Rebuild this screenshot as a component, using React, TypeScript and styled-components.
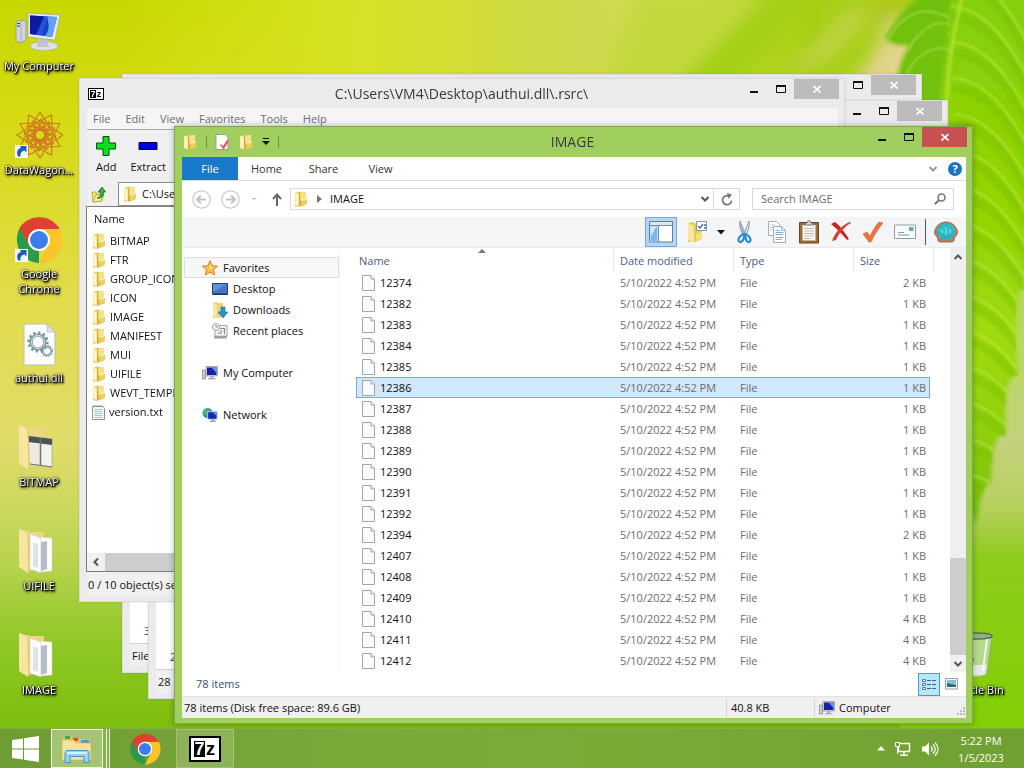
import React from "react";
import styled, { createGlobalStyle } from "styled-components";

const GlobalStyle = createGlobalStyle`
  *, *::before, *::after { box-sizing: border-box; }
  html, body { margin: 0; height: 100%; overflow: hidden; }
  body { font: 11px/16px "Open Sans", "Noto Sans", sans-serif; color: #111; }
  button, input { font: inherit; color: inherit; margin: 0; padding: 0; border: 0; background: none; }
  a { color: inherit; text-decoration: none; }
  svg { display: block; flex: none; }
`;

/* ---------- desktop ---------- */

const Screen = styled.div`
  display: flex;
  flex-direction: column;
  height: 100vh;
  position: relative;
  overflow: hidden;
`;

const Wallpaper = styled.svg`
  position: absolute;
  inset: 0;
  width: 100%;
  height: 100%;
`;

const Desktop = styled.main`
  flex: 1;
  min-height: 0;
  position: relative;
`;

const Shortcuts = styled.nav`
  position: relative;
  width: 78px;
  display: flex;
  flex-direction: column;
`;

const ShortcutLink = styled.a<{ $corner?: boolean }>`
  display: flex;
  flex-direction: column;
  align-items: center;
  gap: 2px;
  width: 78px;
  height: 104px;
  padding-top: 8px;
  line-height: 15px;
  text-align: center;
  color: #fff;
  text-shadow: 0 0 1px #000, 1px 1px 1px #000, 1px 1px 2px #000, 0 0 3px #000, 1px 2px 3px #000;
  ${(p) => p.$corner && "position: absolute; right: 10px; bottom: 0;"}
  span { white-space: nowrap; }
`;

/* ---------- window chrome ---------- */

interface Place { $left: number; $top: number; $right: number; $bottom: number; $active?: boolean }

const Frame = styled.section<Place>`
  position: absolute;
  left: ${(p) => p.$left}px;
  top: ${(p) => p.$top}px;
  right: ${(p) => p.$right}px;
  bottom: ${(p) => p.$bottom}px;
  display: flex;
  flex-direction: column;
  border: 1px solid ${(p) => (p.$active ? "#7fa84c" : "#dcdcdc")};
  background: ${(p) => (p.$active ? "#a0cf60" : "#ebebeb")};
  box-shadow: 0 0 ${(p) => (p.$active ? "6px rgba(0,0,0,.3)" : "2px rgba(0,0,0,.12)")};
`;

const TitleBar = styled.header<{ $tall?: boolean }>`
  flex: none;
  height: ${(p) => (p.$tall ? 30 : 29)}px;
  display: grid;
  grid-template-columns: 1fr auto 1fr;
  align-items: center;
  padding-right: 5px;
  padding-left: ${(p) => (p.$tall ? 7 : 8)}px;
  h1 { margin: 0 4px 0 0; font-size: 14px; line-height: 20px; font-weight: 400; color: #3a3a3a; }
`;

const Controls = styled.div`
  display: flex;
  justify-self: end;
  align-self: start;
`;

const ControlButton = styled.button<{ $close?: boolean; $active?: boolean }>`
  width: ${(p) => (p.$close ? 45 : 27)}px;
  height: 20px;
  display: flex;
  align-items: center;
  justify-content: center;
  background: ${(p) => (p.$close ? (p.$active ? "#c75050" : "#bcbcbc") : "transparent")};
`;

const Client = styled.div`
  flex: 1;
  min-height: 0;
  display: flex;
  flex-direction: column;
  margin: 0 6px 5px 7px;
  background: #fff;
`;

const WindowControls = ({ active }: { active?: boolean }) => (
  <Controls>
    <ControlButton aria-label="Minimize">
      <svg width="10" height="10"><path d="M1 8h8" stroke="#111" strokeWidth="2" /></svg>
    </ControlButton>
    <ControlButton aria-label="Maximize">
      <svg width="10" height="10"><path d="M.5 2v6.500h9V2z" fill="none" stroke="#111" /><path d="M0 2h10" stroke="#111" strokeWidth="2" /></svg>
    </ControlButton>
    <ControlButton aria-label="Close" $close $active={active}>
      <svg width="8" height="8"><path d="M.5 1l7 6.500M7.500 1l-7 6.500" stroke="#fff" strokeWidth="1.700" /></svg>
    </ControlButton>
  </Controls>
);

/* ---------- 7-Zip ---------- */

const ZipBadge = styled.span<{ $large?: boolean }>`
  display: inline-flex;
  width: ${(p) => (p.$large ? 32 : 16)}px;
  height: ${(p) => (p.$large ? 26 : 12)}px;
  border: ${(p) => (p.$large ? 2 : 1)}px solid #000;
  padding: ${(p) => (p.$large ? 3 : 1)}px;
  background: #fff;
  color: #000;
  font: 700 ${(p) => (p.$large ? "18px/17px" : "9px/8px")} "Liberation Sans", sans-serif;
  b, i { flex: 1; text-align: center; font-style: normal; font-weight: 700; }
  b { background: #000; color: #fff; }
`;
const SevenZip = ({ large }: { large?: boolean }) => <ZipBadge $large={large}><b>7</b><i>z</i></ZipBadge>;

const MenuBar = styled.div`
  flex: none;
  height: 22px;
  display: flex;
  align-items: center;
  gap: 15px;
  padding-left: 6px;
  background: #f5f5f5;
  border-bottom: 1px solid #a8a8a8;
  color: #6e6e6e;
`;

const ZipTools = styled.div`
  flex: none;
  height: 52px;
  display: flex;
  gap: 14px;
  padding: 6px 0 0 9px;
  background: #f0f0f0;
  button { display: flex; flex-direction: column; align-items: center; gap: 3px; align-self: start; }
`;

const ZipPath = styled.div`
  flex: none;
  height: 24px;
  display: flex;
  background: #f0f0f0;
  > button { width: 31px; display: flex; align-items: center; padding-left: 4px; }
  > label { flex: 1; display: flex; align-items: center; gap: 4px; padding-left: 3px; background: #fff; border: 1px solid #8c8c8c; }
  input { flex: 1; }
`;

const ZipList = styled.div`
  flex: 1;
  min-height: 0;
  display: flex;
  flex-direction: column;
  border: 1px solid #7c7c7c;
  border-right: 0;
  margin-left: -1px;
  h2 { margin: 0; padding: 4px 7px; height: 24px; font: inherit; }
  ul { list-style: none; margin: 0; padding: 0; flex: 1; min-height: 0; }
  li { height: 19px; display: flex; align-items: center; gap: 3px; padding-left: 4px; white-space: nowrap; }
`;

const HScroll = styled.div`
  height: 18px;
  display: flex;
  background: #cdcdcd;
  button { width: 18px; background: #f0f0f0; display: flex; align-items: center; justify-content: center; }
`;

const ZipStatus = styled.footer`
  flex: none;
  height: 24px;
  padding: 5px 1px;
  background: #f0f0f0;
`;

const BackBody = styled.div`
  flex: 1;
  display: flex;
  align-items: flex-end;
  padding: 0 14px 4px;
  border-bottom: 1px solid #d0d0d0;
  color: #444;
`;

const BackStatus = styled.footer`
  height: 23px;
  padding: 4px 2px;
  background: #f0f0f0;
`;

/* ---------- Explorer ---------- */

const QuickAccess = styled.div`
  display: flex;
  align-items: center;
  gap: 8px;
  button { display: flex; }
`;

const Divider = styled.span<{ $dark?: boolean }>`
  width: 1px;
  height: ${(p) => (p.$dark ? 26 : 12)}px;
  background: ${(p) => (p.$dark ? "#555" : "#6f9440")};
`;

const Tabs = styled.div`
  flex: none;
  height: 24px;
  display: flex;
  align-items: stretch;
  border-bottom: 1px solid #dadbdc;
`;

const Tab = styled.button<{ $primary?: boolean }>`
  width: ${(p) => (p.$primary ? 56 : 57)}px;
  color: ${(p) => (p.$primary ? "#fff" : "#333")};
  background: ${(p) => (p.$primary ? "#1979ca" : "transparent")};
`;

const TabsEnd = styled.div`
  margin-left: auto;
  display: flex;
  align-items: center;
  gap: 10px;
  padding-right: 4px;
  button { display: flex; }
`;

const Help = styled.button`
  width: 14px;
  height: 14px;
  border-radius: 50%;
  background: #1b73c4;
  color: #fff;
  justify-content: center;
  font-weight: 700;
  line-height: 14px;
`;

const NavRow = styled.div`
  flex: none;
  height: 36px;
  display: flex;
  align-items: center;
  gap: 10px;
  padding: 0 12px 0 10px;
  > button { display: flex; }
`;

const Box = styled.div<{ $search?: boolean }>`
  height: 22px;
  display: flex;
  align-items: center;
  border: 1px solid #d9d9d9;
  ${(p) => (p.$search ? "flex: 0 0 202px; margin-left: 2px; padding: 0 7px 0 8px;" : "flex: 1; padding-left: 2px; gap: 8px; margin-left: -6px;")}
  button { display: flex; align-items: center; }
  input { flex: 1; min-width: 0; outline: 0; }
  input::placeholder { color: #6d6d6d; opacity: 1; }
`;

const BoxEnd = styled.div`
  margin-left: auto;
  display: flex;
  align-self: stretch;
  button { width: 25px; justify-content: center; }
  button:first-child { width: 18px; border-right: 1px solid #d9d9d9; }
`;

const CommandBar = styled.div`
  flex: none;
  height: 31px;
  display: flex;
  align-items: center;
  justify-content: flex-end;
  gap: 8px;
  padding-right: 8px;
  background: #f3f5f7;
  border-bottom: 1px solid #e6ebf0;
`;

const Command = styled.button<{ $on?: boolean }>`
  display: flex;
  align-items: center;
  justify-content: center;
  min-width: ${(p) => (p.$on ? 32 : 24)}px;
  height: 30px;
  ${(p) => p.$on && "background: #b9d5f3; border: 1px solid #76a7de;"}
`;

const Panes = styled.div`
  flex: 1;
  min-height: 0;
  display: flex;
`;

const Tree = styled.nav`
  flex: 0 0 158px;
  padding: 9px 0 0 2px;
  border-right: 1px solid #f7f7f7;
`;

const TreeItem = styled.a<{ $depth?: boolean; $head?: boolean; $spaced?: boolean }>`
  display: flex;
  align-items: center;
  gap: 5px;
  height: 21px;
  padding-left: ${(p) => (p.$depth ? 28 : 18)}px;
  margin-top: ${(p) => (p.$spaced ? 21 : 0)}px;
  ${(p) => p.$head && "background: #f7f7f7; box-shadow: inset 0 0 0 1px #dedede;"}
`;

const ListPane = styled.div`
  flex: 1;
  min-width: 0;
  overflow: hidden;
  padding: 0 16px 0 16px;
`;

const Table = styled.table`
  width: 100%;
  table-layout: fixed;
  border-collapse: separate;
  border-spacing: 0;
  th { height: 24px; padding: 2px 6px 0; font-weight: 400; text-align: left; color: #4c607a; position: relative; border-right: 1px solid #eaeaea; }
  th:first-child { padding-left: 3px; }
  td { height: 21px; padding: 0 7px 0 6px; color: #6d6d6d; white-space: nowrap; }
  td:nth-child(4) { text-align: right; padding: 0 4px 0 0; }
`;

const SortMark = styled.svg`
  position: absolute;
  top: 1px;
  left: 50%;
  margin-left: -7px;
`;

const FileRow = styled.tr<{ $selected?: boolean }>`
  ${(p) => p.$selected && `
    td:not(:last-child) { background: #d1e8fb; border: solid #7da8d0; border-width: 1px 0; }
    td:first-child { border-left-width: 1px; padding-left: 5px; }
    td:nth-child(4) { border-right-width: 1px; padding-right: 3px; }
  `}
`;

const FileName = styled.span`
  display: flex;
  align-items: center;
  gap: 5px;
  color: #111;
`;

const VScroll = styled.div`
  flex: 0 0 16px;
  display: flex;
  flex-direction: column;
  background: #f0f0f0;
  button { height: 17px; display: flex; align-items: center; justify-content: center; }
`;

const Track = styled.div`
  flex: 1;
  display: flex;
  align-items: flex-end;
  &::after { content: ""; width: 100%; height: 25%; background: #cdcdcd; }
`;

const Details = styled.div`
  flex: none;
  height: 24px;
  display: flex;
  align-items: center;
  padding: 0 4px 0 14px;
  color: #3c5064;
  span { flex: 1; }
`;

const ViewButton = styled.button<{ $on?: boolean }>`
  display: flex;
  align-items: center;
  justify-content: center;
  width: 22px;
  height: 23px;
  ${(p) => p.$on && "background: #b8e6fb; border: 1px solid #3fa0d0;"}
`;

const StatusBar = styled.footer`
  flex: none;
  height: 22px;
  display: flex;
  align-items: center;
  background: #f0f0f0;
  border-top: 1px solid #e2e2e2;
`;

const StatusCell = styled.span<{ $width?: number }>`
  ${(p) => (p.$width ? `flex: 0 0 ${p.$width}px; padding-left: 4px; border-left: 1px solid #d7d7d7;` : "flex: 1; padding-left: 2px;")}
  display: flex;
  align-items: center;
  gap: 4px;
  height: 20px;
  svg:last-child:not(:first-child) { margin: 7px 1px 0 auto; }
`;

/* ---------- taskbar ---------- */

const Taskbar = styled.footer`
  flex: none;
  height: 40px;
  position: relative;
  display: flex;
  align-items: stretch;
  background: linear-gradient(90deg, #6f9c33, #7aa93a 35%, #7aaa36 60%, #70a033);
  border-top: 1px solid #82ae45;
`;

const TaskButton = styled.button<{ $width: number; $state?: "front" | "open" }>`
  width: ${(p) => p.$width}px;
  display: flex;
  align-items: center;
  justify-content: center;
  ${(p) => p.$state === "front" && "background: #a4c474; border: 1px solid #eef6e0; box-shadow: 3px 0 0 #86b04c, 4px 0 0 #eef6e0, 6px 0 0 #86b04c, 7px 0 0 #dcebc4; margin-right: 10px; position: relative;"}
  ${(p) => p.$state === "open" && "background: #8db257; border: 1px solid #a3c276;"}
`;

const Tray = styled.div`
  margin-left: auto;
  display: flex;
  align-items: center;
  gap: 9px;
  color: #fff;
  button { display: flex; }
`;

const Clock = styled.time`
  width: 76px;
  margin-left: -4px;
  padding-right: 2px;
  margin-right: 4px;
  line-height: 17px;
  text-align: center;
`;

/* ---------- small drawings ---------- */

const Folder = ({ size = 16 }: { size?: number }) => (
  <svg width={size} height={size} viewBox="0 0 16 16">
    <path d="M2 2l4.500-1.500L8 1h4l1 1v11.500L7.500 15.500H2z" fill="#e3c34e" />
    <path d="M7 2.500l2-1.500h4v7l-6 2z" fill="#f6e389" />
    <path d="M9 9l5-2v6l-5 2z" fill="#efcf62" />
    <path d="M2 1.500L6.500 3v12.500L2 14z" fill="#f9eda4" />
    <path d="M3 3l2 .7v10L3 13z" fill="#fdf7c8" />
    <path d="M6.700 3v12.500" stroke="#c79f34" />
    <path d="M9.500 9.200l4.500-2" stroke="#fffbe0" />
  </svg>
);

const PageIcon = () => (
  <svg width="13" height="16" viewBox="0 0 13 16">
    <path d="M.5.500h8.500l3.500 3.500v11.500H.5z" fill="#fbfbfb" stroke="#a4a4a4" />
    <path d="M9 .5V4h3.500" fill="#eee" stroke="#a4a4a4" />
  </svg>
);

const TextFile = () => (
  <svg width="15" height="16" viewBox="0 0 15 16">
    <path d="M1.500 2.500h10.500l1.500 2v11h-12z" fill="#f6f8f8" stroke="#8b9393" />
    <path d="M3 1v2M5 1v2M7 1v2M9 1v2M11 1v2" stroke="#888" strokeWidth=".8" />
    <path d="M3.500 5.500h8M3.500 7.500h8M3.500 9.500h8M3.500 11.500h8M3.500 13.500h8" stroke="#a8c4c4" />
  </svg>
);

const Monitor = () => (
  <svg width="16" height="16" viewBox="0 0 16 16">
    <path d="M.5 5h3v9h-3z" fill="#c9cdd3" stroke="#868b92" strokeWidth=".8" />
    <path d="M4 1.500h11.500v9.500H4z" fill="#d9dce2" stroke="#8e9299" strokeWidth=".7" />
    <path d="M5 2.500h9.500v7.500H5z" fill="#1523a5" />
    <path d="M9.500 2.500h5V8z" fill="#7690e6" />
    <path d="M8 11h3.500v2H8zM6 13h7.500v1.500H6z" fill="#aeb2b8" />
  </svg>
);

const Chevron = ({ up, side, color = "#555" }: { up?: boolean; side?: boolean; color?: string }) => (
  <svg width="10" height="10" viewBox="0 0 10 10">
    <path d={side ? "M7 1.500L3.500 5 7 8.500" : up ? "M1.500 7L5 3.500 8.500 7" : "M1.500 3L5 6.500 8.500 3"} fill="none" stroke={color} strokeWidth="2" />
  </svg>
);

const ShortcutArrow = () => (
  <g>
    <path d="M0 33h13v13H0z" fill="#f5f8fb" />
    <path d="M3 44.500c-2-4-.5-8 3-8.500L5 34l6.500 0v6.500L9.500 38.500C6.500 39 5 41 5.500 44.500z" fill="#1c5fb4" />
  </g>
);

const BigComputer = () => (
  <svg width="48" height="48" viewBox="0 0 48 48">
    <path d="M1 14l5-2 5 1v19l-5 3-5-2z" fill="#d0d5dc" stroke="#8a9098" strokeWidth=".7" />
    <path d="M6 13v21" stroke="#9aa0a8" strokeWidth=".7" />
    <path d="M2 15.500h3M2 18h3" stroke="#444" />
    <ellipse cx="29" cy="38" rx="14" ry="4.500" fill="#dfe1e5" stroke="#a3a7ac" strokeWidth=".6" />
    <path d="M23 31h9l2 8h-12z" fill="#bfc3ca" />
    <path d="M13 5l32 2-5 25-27-3z" fill="#e8eaef" stroke="#9ea4ad" strokeWidth=".7" />
    <path d="M15 7.500l27 1.500-5 20-22-3z" fill="#1b3fc8" />
    <path d="M15 7.500l14 .8-8 18.500-6-.8z" fill="#0b1b9c" />
    <path d="M32 8.500l10 .5-5 20-7-.9c5-6 4-12 2-19.600z" fill="#5fa4f0" />
    <path d="M30 8.300l3 .2-6 19-6-.8z" fill="#2a5bd8" opacity=".7" />
  </svg>
);

const Rosette = () => (
  <svg width="48" height="48" viewBox="0 0 48 48">
    <g fill="none" stroke="#d07c22" strokeWidth="1.200">
      {Array.from({ length: 12 }, (_, i) => (
        <path key={i} transform={`rotate(${i * 30} 25 23)`} d="M25 0L35 16 25 32 15 16zM25 17c5-2 5-8 0-10" />
      ))}
    </g>
    <ShortcutArrow />
  </svg>
);

const Chrome = ({ size = 48, shortcut }: { size?: number; shortcut?: boolean }) => (
  <svg width={size} height={size} viewBox="0 0 48 48">
    <path d="M4.900 12l9.600 17.500L24 34l0 13A23.500 23.500 0 0 1 4.900 12z" fill="#2a9a4c" />
    <path d="M24 13h20.700A23.500 23.500 0 0 1 24 47.500L33.500 29.500z" fill="#fcc42b" />
    <path d="M44.700 13H24L14.500 29.500 4.400 12.200A23.500 23.500 0 0 1 44.700 13z" fill="#dd4132" />
    <circle cx="24" cy="24" r="11" fill="#fff" />
    <circle cx="24" cy="24" r="9" fill="#3b7ded" />
    {shortcut && <ShortcutArrow />}
  </svg>
);

const Gear = ({ cx, cy, r }: { cx: number; cy: number; r: number }) => (
  <g fill="none">
    <circle cx={cx} cy={cy} r={r} stroke="#73909c" strokeWidth={r / 2.200} />
    <circle cx={cx} cy={cy} r={r * 1.350} stroke="#73909c" strokeWidth={r / 3} strokeDasharray={`${r / 3} ${r / 2.700}`} />
    <circle cx={cx} cy={cy} r={r * 0.950} stroke="#c8dbe2" strokeWidth={r / 6} />
  </g>
);

const DllFile = () => (
  <svg width="48" height="48" viewBox="0 0 48 48">
    <path d="M9 4h23l8 8v33H9z" fill="#fcfcfc" stroke="#bdbdb0" />
    <path d="M32 4v8h8z" fill="#dfe2e2" stroke="#b0b0a8" strokeWidth=".6" />
    <Gear cx={23} cy={22} r={7} />
    <Gear cx={32} cy={31} r={4} />
  </svg>
);

const OpenFolder = ({ photo }: { photo?: boolean }) => (
  <svg width="48" height="48" viewBox="0 0 48 48">
    <path d="M4 1l12 3h13v36l-14 3z" fill="#ecd684" />
    {photo ? (
      <g>
        <path d="M13 12l24 3v28l-22-3z" fill="#f4f2ee" stroke="#98988e" strokeWidth=".6" />
        <path d="M13 12l24 3v6l-24-3z" fill="#4b5354" />
        <path d="M14 19l12 1v20l-11-2z" fill="#f1e9e0" />
        <path d="M25.500 14v28" stroke="#6b7374" strokeWidth="1.500" />
        <path d="M15 40l22 3" stroke="#777" />
      </g>
    ) : (
      <g>
        <path d="M25 9l12 1v33l-11 1z" fill="#fff" stroke="#cfcfcf" strokeWidth=".6" />
        <path d="M26 14l6-1v28l-6 2z" fill="#b4bdc8" />
        <path d="M15 6l11 4v35l-11-4z" fill="#fbfbfc" stroke="#cfcfd2" strokeWidth=".6" />
        <path d="M18 14l5 2v24l-5-2z" fill="#e2e2e6" />
      </g>
    )}
    <path d="M4 1l9 5 2 34-2 5-9-6z" fill="#f7e6a2" />
    <path d="M13 6l1 38" stroke="#dcc06a" />
  </svg>
);

const RecycleBin = () => (
  <svg width="48" height="48" viewBox="0 0 48 48">
    <path d="M10 3h31l-5 39c-6 4-15 4-21 0z" fill="#c3dcae" opacity=".8" stroke="#98a898" />
    <ellipse cx="25.500" cy="4" rx="15.500" ry="3" fill="#8db578" stroke="#5c6c5c" strokeWidth="1.500" />
    <path d="M15 33h21l-2 9c-5 2-12 2-17 0z" fill="#e4ebe4" />
    <path d="M12 24l9-2 2 6-5 6-6-3z" fill="#2a62bd" />
    <path d="M36 7l-4 32" stroke="#fff" strokeWidth="2" opacity=".8" />
  </svg>
);

const Star = () => (
  <svg width="16" height="16" viewBox="0 0 16 16">
    <path d="M8 .8l2.100 5 5.400.400-4.100 3.500 1.300 5.300L8 12.100 3.300 15l1.300-5.300L.5 6.200l5.400-.4z" fill="#ffc44a" stroke="#e17a1d" />
    <path d="M8 3l1 4 3 .5L8 9z" fill="#fff0a4" />
  </svg>
);

const DesktopIcon = () => (
  <svg width="16" height="16" viewBox="0 0 16 16">
    <path d="M.5 2.500h15v11H.5z" fill="#3f76c8" stroke="#27405f" />
    <path d="M1 3h14L1 11z" fill="#5d93de" />
    <path d="M1 13h14" stroke="#1d2c44" />
  </svg>
);

const Downloads = () => (
  <svg width="16" height="16" viewBox="0 0 16 16">
    <path d="M1 1l4-1 1 1h5v13l-5 2H1z" fill="#ecd272" />
    <path d="M1 1l4 2v13l-4-2z" fill="#f8e9a4" />
    <path d="M9 5h4v5h3l-5 6-5-6h3z" fill="#2b93cf" stroke="#1b6fa8" strokeWidth=".6" />
  </svg>
);

const Recent = () => (
  <svg width="16" height="16" viewBox="0 0 16 16">
    <path d="M4 2.500h11v10.500h-2v2H3V8z" fill="#eef0f1" stroke="#a2a7aa" />
    <circle cx="4" cy="4" r="3.500" fill="#f4f4f4" stroke="#a2a7aa" />
    <path d="M4 2v2h2M8 5.500h5M8 8h2M11.500 8h1.500M6 10h4M12.500 5.500V11" fill="none" stroke="#858b8f" />
    <path d="M2 14h13" stroke="#a0a0a0" strokeWidth="2.500" />
  </svg>
);

const NetworkIcon = () => (
  <svg width="16" height="16" viewBox="0 0 17 16">
    <circle cx="6" cy="6" r="5.500" fill="#2e8fcd" />
    <path d="M2 3c2-3 5-2 6-1L6 5 4 8 1 7zM8 4l3 2-3 3z" fill="#50b84c" />
    <path d="M6 4.500h10v8H6z" fill="#1529ae" stroke="#c8d3e6" />
    <path d="M11 5h4.500v4z" fill="#6a8deb" />
    <path d="M10 12.500h3v2h2v1H8v-1h2z" fill="#9aa2ad" />
  </svg>
);

const NavArrow = ({ flip }: { flip?: boolean }) => (
  <svg width="19" height="19" viewBox="0 0 19 19">
    <circle cx="9.500" cy="9.500" r="8.700" fill="#fff" stroke="#c9c9c9" strokeWidth="1.200" />
    <path d={flip ? "M5 9.500h8.500M10 5.500l4 4-4 4" : "M14 9.500H5.500M9 5.500l-4 4 4 4"} fill="none" stroke="#c2c2c2" strokeWidth="2" />
  </svg>
);

const Caret = ({ color = "#111" }: { color?: string }) => (
  <svg width="8" height="5"><path d="M0 0h8L4 4.500z" fill={color} /></svg>
);

const LayoutIcon = () => (
  <svg width="24" height="22" viewBox="0 0 24 22">
    <path d="M.5.500h23v20.500H.5z" fill="#fff" stroke="#5f7fa4" />
    <path d="M1 2.500h22" stroke="#dbe7f3" strokeWidth="3" />
    <path d="M1.500 5.500h7v15h-7z" fill="#7bb6ee" /><path d="M2 6h5l-5 9z" fill="#d8ecfd" />
    <path d="M1 4.500h22M9.500 5v16" stroke="#718cab" />
  </svg>
);

const OptionsFolder = () => (
  <svg width="22" height="24" viewBox="0 0 22 24">
    <path d="M2 3l6-1 1 2h7v15l-7 3H2z" fill="#e7c955" />
    <path d="M2 3l6 3v17l-6-3z" fill="#f9e89c" /><path d="M10 14l6-3v8l-6 2z" fill="#f6de7e" />
    <path d="M10.500 1.500h10v9h-10z" fill="#fff" stroke="#8494a4" />
    <path d="M12 6l2 2 3-4M18 5h2M18 8h2" fill="none" stroke="#3e6bb0" strokeWidth="1.300" />
  </svg>
);

const Scissors = () => (
  <svg width="18" height="24" viewBox="0 0 18 24">
    <path d="M4 1l6 15-2 1C5 12 3 6 4 1z" fill="#a8bccc" stroke="#68879e" strokeWidth=".7" />
    <path d="M13 1L7 16l2 1c3-5 5-11 4-16z" fill="#d5e1ea" stroke="#68879e" strokeWidth=".7" />
    <path d="M8 14c-3 1-5 3-5.500 5.500-.3 2 1.200 3 2.800 2.300C8 20.500 8 17 9 14zM9 14c3 1 5 3 5.500 5.500.3 2-1.200 3-2.800 2.300C9 20.500 10 17 9 14z" fill="none" stroke="#2d8ccc" strokeWidth="2.200" />
  </svg>
);

const CopyIcon = () => (
  <svg width="20" height="24" viewBox="0 0 20 24">
    <path d="M1.500 1.500h8l3 3v11h-11z" fill="#fff" stroke="#a3aeb8" />
    <path d="M3 5h5M3 7.500h5M3 10h5" stroke="#b4c2ce" />
    <path d="M6.500 6.500h8l4 4v12h-12z" fill="#fff" stroke="#a3aeb8" />
    <path d="M14.500 6.500v4h4" fill="none" stroke="#a3aeb8" />
    <path d="M8.500 10.500h4M8.500 12.500h8M8.500 14.500h8M8.500 17.500h8M8.500 19.500h6" stroke="#86aace" />
  </svg>
);

const Clipboard = () => (
  <svg width="20" height="24" viewBox="0 0 20 24">
    <path d="M.5 2.500h19v20.500H.5z" fill="#9b6a35" stroke="#6d4521" />
    <path d="M3.500 5h13v15.500h-13z" fill="#fbfaf1" />
    <path d="M5 8.500h10M5 11h10M5 13.500h10M5 16h10M5 18.500h7" stroke="#b8bcb2" />
    <path d="M5 5c0-2 2-2 3-2 0-3 4-3 4 0 1 0 3 0 3 2z" fill="#d5d7d8" stroke="#555" strokeWidth=".8" />
  </svg>
);

const DeleteIcon = () => (
  <svg width="22" height="22" viewBox="0 0 22 22">
    <path d="M1 3l4-2c4 3 9 9 14 17l-2 1C11 12 6 7 1 3z" fill="#c4271b" />
    <path d="M21 2c-7 4-12 10-15 17l-4 1C5 11 12 4 20 1z" fill="#dc3b2a" />
  </svg>
);

const CheckIcon = () => (
  <svg width="22" height="22" viewBox="0 0 22 22">
    <path d="M1 13l4-2 3 4c3-6 6-11 9-14l4 1C17 7 12 14 9 21H7z" fill="#ec7441" stroke="#d26131" strokeWidth=".6" />
  </svg>
);

const Mail = () => (
  <svg width="22" height="16" viewBox="0 0 22 16">
    <path d="M.5 1h21v13.500H.5z" fill="#f9fbfb" stroke="#8f9ea5" />
    <path d="M15 3h4.500v4H15z" fill="#53b0aa" />
    <path d="M4 8.500h6M4 11h11" stroke="#8b989f" />
  </svg>
);

const Shell = () => (
  <svg width="24" height="22" viewBox="0 0 24 22">
    <path d="M7 21c-3 0-4-2-3-4C0 14 0 10 1.500 8 3 4 7 1 12 1s9 3 10.500 7c1.500 2 1.500 6-2.500 9 1 2 0 4-3 4H7z" fill="#b3805f" stroke="#8d6e58" />
    <path d="M9 19C3 15 2 9 4 6.500c3-5 13-5 16 0 2 2.500 1 8.500-5 12.500z" fill="#2fc0ca" />
    <path d="M12 18V3M11 18L6 5M13 18l5-13M10 18L3 10M14 18l7-8" stroke="#1f93a6" strokeWidth=".6" />
    <path d="M12 14V6M9 12L7 8M15 12l2-4" stroke="#7aeff2" strokeWidth="2" opacity=".6" />
  </svg>
);

const CheckedPage = () => (
  <svg width="15" height="16" viewBox="0 0 15 16">
    <path d="M1 .5h9l3 3v12H1z" fill="#fff" stroke="#999" />
    <path d="M6 10l2 2 4-6 2 1-5 8H8l-3-4z" fill="#e2604e" />
  </svg>
);

const FolderUp = () => (
  <svg width="16" height="17" viewBox="0 0 16 17">
    <path d="M1 6h4l1 2h5v7l-9 1z" fill="#f3e060" stroke="#aaa03c" strokeWidth=".8" />
    <path d="M2 16L5 9h8l-3 6z" fill="#fff39a" stroke="#aaa03c" strokeWidth=".8" />
    <path d="M6 12c4-1 4-4 3.500-6H7l4-5 3.500 5h-2c.5 4-2 7-6.500 6z" fill="#36b53c" stroke="#14681c" strokeWidth=".8" />
  </svg>
);

const ExplorerIcon = () => (
  <svg width="32" height="30" viewBox="0 0 32 30">
    <path d="M2 3h9l2 2h16v20H2z" fill="#e6c567" />
    <path d="M4 2h5v3H4z" fill="#4ca252" /><path d="M12 4h5v3h-5z" fill="#d64a3a" /><path d="M20 6h8v3h-8z" fill="#4c97d5" />
    <path d="M1 6h12l2 3h15v17H1z" fill="#f8e29b" stroke="#d4b159" strokeWidth=".7" />
    <path d="M4 28.500v-9c0-2 1-3 3-3h18c2 0 3 1 3 3v9h-5v-6H9v6z" fill="#93d2f3" stroke="#3e97cb" />
    <path d="M6 19h20" stroke="#d4f1fd" strokeWidth="2" />
  </svg>
);

const WindowsLogo = () => (
  <svg width="27" height="26" viewBox="0 0 27 26">
    <path d="M0 4l11-1.600v10H0zM12 2.200L27 0v12.400H12zM0 13.500h11v10L0 22zM12 13.500h15V26l-15-2.300z" fill="#fff" />
  </svg>
);

/* ---------- wallpaper ---------- */

const veins = Array.from({ length: 15 }, (_, i) => i);

const Background = () => (
  <Wallpaper viewBox="0 0 1024 768" preserveAspectRatio="none" aria-hidden="true">
    <defs>
      <linearGradient id="sky" x1="0" y1="0" x2="0" y2="1">
        <stop offset="0" stopColor="#c6d800" /><stop offset=".16" stopColor="#d6da14" />
        <stop offset=".4" stopColor="#e2dc4e" /><stop offset=".58" stopColor="#e0dc6a" />
        <stop offset=".72" stopColor="#bdd452" /><stop offset=".84" stopColor="#8fc726" />
        <stop offset="1" stopColor="#75b900" />
      </linearGradient>
      <linearGradient id="haze" x1="0" y1="0" x2="1" y2="0">
        <stop offset="0" stopColor="#dbe622" stopOpacity="0" /><stop offset=".35" stopColor="#d5e226" />
        <stop offset=".6" stopColor="#cfd944" /><stop offset=".78" stopColor="#d0da58" />
        <stop offset=".92" stopColor="#b4d422" /><stop offset="1" stopColor="#a4ce10" />
      </linearGradient>
      <linearGradient id="ground" x1="0" y1="0" x2="0" y2="1">
        <stop offset="0" stopColor="#a6dc3c" /><stop offset=".35" stopColor="#b6d860" />
        <stop offset=".5" stopColor="#c4d27c" /><stop offset=".6" stopColor="#b8d060" />
        <stop offset=".68" stopColor="#8dcc1c" /><stop offset="1" stopColor="#7fd000" />
      </linearGradient>
      <linearGradient id="leaf" x1="0" y1="0" x2="0" y2="1">
        <stop offset="0" stopColor="#84cf0a" /><stop offset=".35" stopColor="#92d404" />
        <stop offset=".65" stopColor="#a0da0a" /><stop offset=".85" stopColor="#8ccc0a" />
        <stop offset="1" stopColor="#6cb80a" />
      </linearGradient>
      <clipPath id="leafShape">
        <path d="M885 38C900 12 915 0 925-10H1034V170L1024 290C1014 284 1014 330 1018 376C1006 372 1004 400 1006 436C995 430 992 450 991 482C982 484 980 505 976 524L940 460V120L898 110C894 80 900 60 910 45C898 46 890 44 885 38z" />
      </clipPath>
      <filter id="soft" x="-20%" y="-20%" width="140%" height="140%"><feGaussianBlur stdDeviation="9" /></filter>
      <filter id="fine"><feGaussianBlur stdDeviation="1" /></filter>
      <filter id="edge"><feGaussianBlur stdDeviation="2" /></filter>
    </defs>
    <path d="M0 0h1024v768H0z" fill="url(#sky)" />
    <path d="M120 0h700v110H120z" fill="url(#haze)" />
    <path d="M820 0h204v120H820z" fill="#a8cf18" />
    <path d="M900 110h124v658H900z" fill="url(#ground)" />
    <g filter="url(#soft)">
      <path d="M890 15l30 20v80H825C860 80 880 50 890 15z" fill="#e2d48c" />
      <path d="M640-10h150L690 90H600z" fill="#c4d83c" />
      <path d="M670 90L770-10h45L735 90z" fill="#a4cf16" />
      <path d="M800 75C825 40 880 5 925-5" stroke="#b5bd0c" strokeWidth="9" fill="none" />
      <path d="M785 75l65-65h25l-55 55z" fill="#c4d44c" />
    </g>
    <g filter="url(#edge)">
      <g clipPath="url(#leafShape)">
        <path d="M860-20h180v560H860z" fill="url(#leaf)" />
        <path d="M880-10h72l-14 130h-50z" fill="#5fb40c" opacity=".55" />
      </g>
    </g>
    <g filter="url(#fine)" clipPath="url(#leafShape)">
      {veins.map((i) => (
        <g key={i} fill="none">
          <path d={`M${950 + i} ${i * 36 - 20}c32 2 60 32 90 100`} stroke="#74be02" strokeWidth="9" opacity=".35" />
          <path d={`M${950 + i} ${i * 36 - 30}c32 2 60 32 90 100`} stroke="#c2ec4e" strokeWidth="2" opacity=".6" />
        </g>
      ))}
      <path d="M888 40C905 10 925 5 950 18M908 50C920 28 935 20 950 24M906 75C915 55 935 44 950 50" stroke="#a4dc48" strokeWidth="2" fill="none" opacity=".8" />
      <path d="M964-10C948 50 944 100 948 160" stroke="#b4e430" strokeWidth="4" fill="none" opacity=".7" />
    </g>
  </Wallpaper>
);

/* ---------- data ---------- */

const files: [string, number][] = [
  ["12374", 2], ["12382", 1], ["12383", 1], ["12384", 1], ["12385", 1], ["12386", 1], ["12387", 1],
  ["12388", 1], ["12389", 1], ["12390", 1], ["12391", 1], ["12392", 1], ["12394", 2], ["12407", 1],
  ["12408", 1], ["12409", 1], ["12410", 4], ["12411", 4], ["12412", 4],
];
const archive = ["BITMAP", "FTR", "GROUP_ICON", "ICON", "IMAGE", "MANIFEST", "MUI", "UIFILE", "WEVT_TEMPLATE"];

const Shortcut = ({ icon, children, corner }: { icon: React.ReactNode; children: React.ReactNode; corner?: boolean }) => (
  <ShortcutLink href="#" $corner={corner}>{icon}<span>{children}</span></ShortcutLink>
);

const BackWindow = ({ item, status, ...place }: Place & { item: string; status: string }) => (
  <Frame {...place}>
    <TitleBar><span /><h1 /><WindowControls /></TitleBar>
    <Client>
      <BackBody>{item}</BackBody>
      <BackStatus>{status}</BackStatus>
    </Client>
  </Frame>
);

const ZipWindow = () => (
  <Frame $left={79} $top={78} $right={179} $bottom={126}>
    <TitleBar>
      <SevenZip />
      <h1>C:\Users\VM4\Desktop\authui.dll\.rsrc\</h1>
      <WindowControls />
    </TitleBar>
    <Client>
      <MenuBar>{["File", "Edit", "View", "Favorites", "Tools", "Help"].map((m) => <button key={m}>{m}</button>)}</MenuBar>
      <ZipTools>
        <button>
          <svg width="20" height="20"><path d="M7 .5h6V7h6.500v6H13v6.500H7V13H.5V7H7z" fill="#0be020" stroke="#054d0b" /></svg>
          Add
        </button>
        <button>
          <svg width="20" height="20"><path d="M1 6.500h18v7H1z" fill="#0000e0" stroke="#000050" /></svg>
          Extract
        </button>
      </ZipTools>
      <ZipPath>
        <button aria-label="Up one level"><FolderUp /></button>
        <label><Folder /><input aria-label="Path" defaultValue="C:\Users\VM4\Desktop\authui.dll\.rsrc\" /></label>
      </ZipPath>
      <ZipList>
        <h2>Name</h2>
        <ul>
          {archive.map((n) => <li key={n}><Folder />{n}</li>)}
          <li><TextFile />version.txt</li>
        </ul>
        <HScroll><button aria-label="Scroll left"><Chevron side /></button></HScroll>
      </ZipList>
      <ZipStatus>0 / 10 object(s) selected</ZipStatus>
    </Client>
  </Frame>
);

const Explorer = () => (
  <Frame $left={174} $top={126} $right={51} $bottom={4} $active>
    <TitleBar $tall>
      <QuickAccess>
        <Folder />
        <Divider />
        <button aria-label="Properties"><CheckedPage /></button>
        <button aria-label="New folder"><Folder /></button>
        <button aria-label="Customize toolbar">
          <svg width="8" height="8"><path d="M1 .5h6" stroke="#111" /><path d="M0 3h8L4 7z" fill="#111" /></svg>
        </button>
        <Divider />
      </QuickAccess>
      <h1>IMAGE</h1>
      <WindowControls active />
    </TitleBar>
    <Client>
      <Tabs>
        <Tab $primary>File</Tab><Tab>Home</Tab><Tab>Share</Tab><Tab>View</Tab>
        <TabsEnd>
          <button aria-label="Expand ribbon"><Chevron color="#999" /></button>
          <Help aria-label="Help">?</Help>
        </TabsEnd>
      </Tabs>
      <NavRow>
        <button aria-label="Back"><NavArrow /></button>
        <button aria-label="Forward"><NavArrow flip /></button>
        <button aria-label="Recent locations"><svg width="8" height="4"><path d="M1 1h6L4 3z" fill="#c4c4c4" /></svg></button>
        <button aria-label="Up"><svg width="18" height="14"><path d="M9 14V3M5 7l4-4.500L13 7" fill="none" stroke="#666" strokeWidth="2" /></svg></button>
        <Box>
          <Folder />
          <svg width="5" height="8"><path d="M0 0l5 4-5 4z" fill="#777" /></svg>
          <button>IMAGE</button>
          <BoxEnd>
            <button aria-label="Previous locations"><Chevron /></button>
            <button aria-label="Refresh">
              <svg width="12" height="13" viewBox="0 0 12 13"><path d="M10.500 7.500A4.500 4.500 0 1 1 7 2.800" fill="none" stroke="#777" strokeWidth="1.700" /><path d="M6 0l5 1.500L7.500 6z" fill="#777" /></svg>
            </button>
          </BoxEnd>
        </Box>
        <Box $search>
          <input aria-label="Search IMAGE" placeholder="Search IMAGE" />
          <button aria-label="Search"><svg width="12" height="12"><circle cx="7.500" cy="4.500" r="3.500" fill="none" stroke="#777" strokeWidth="1.600" /><path d="M5 7L.8 11.200" stroke="#777" strokeWidth="2" /></svg></button>
        </Box>
      </NavRow>
      <CommandBar>
        <Command $on aria-label="Navigation pane"><LayoutIcon /></Command>
        <Command aria-label="Folder options"><OptionsFolder /></Command>
        <Caret />
        <Command aria-label="Cut"><Scissors /></Command>
        <Command aria-label="Copy"><CopyIcon /></Command>
        <Command aria-label="Paste"><Clipboard /></Command>
        <Command aria-label="Delete"><DeleteIcon /></Command>
        <Command aria-label="Rename"><CheckIcon /></Command>
        <Command aria-label="Properties"><Mail /></Command>
        <Divider $dark />
        <Command aria-label="Classic Shell"><Shell /></Command>
      </CommandBar>
      <Panes>
        <Tree>
          <TreeItem href="#" $head><Star />Favorites</TreeItem>
          <TreeItem href="#" $depth><DesktopIcon />Desktop</TreeItem>
          <TreeItem href="#" $depth><Downloads />Downloads</TreeItem>
          <TreeItem href="#" $depth><Recent />Recent places</TreeItem>
          <TreeItem href="#" $spaced><Monitor />My Computer</TreeItem>
          <TreeItem href="#" $spaced><NetworkIcon />Network</TreeItem>
        </Tree>
        <ListPane>
          <Table>
            <colgroup><col /><col width="120" /><col width="120" /><col width="76" /><col width="4" /></colgroup>
            <thead>
              <tr>
                <th>Name<SortMark width="8" height="4"><path d="M0 4l4-4 4 4z" fill="#777" /></SortMark></th>
                <th>Date modified</th><th>Type</th><th colSpan={2}>Size</th>
              </tr>
            </thead>
            <tbody>
              {files.map(([name, size]) => (
                <FileRow key={name} $selected={name === "12386"}>
                  <td><FileName><PageIcon />{name}</FileName></td>
                  <td>5/10/2022 4:52 PM</td><td>File</td><td>{size} KB</td><td />
                </FileRow>
              ))}
            </tbody>
          </Table>
        </ListPane>
        <VScroll>
          <button aria-label="Scroll up"><Chevron up /></button>
          <Track />
          <button aria-label="Scroll down"><Chevron /></button>
        </VScroll>
      </Panes>
      <Details>
        <span>78 items</span>
        <ViewButton $on aria-label="Details view">
          <svg width="16" height="13"><path d="M1.500 1.500h3v2h-3zM1.500 5.500h3v2h-3zM1.500 9.500h3v2h-3z" fill="#fff" stroke="#607d98" /><path d="M6 2.500h4M11 2.500h4M6 6.500h4M11 6.500h4M6 10.500h4M11 10.500h4" stroke="#35638d" /></svg>
        </ViewButton>
        <ViewButton aria-label="Large icons view">
          <svg width="13" height="12"><path d="M.5.500h12v10.500H.5z" fill="#fff" stroke="#8ba0b2" /><path d="M2 2h9v7H2z" fill="#83c2de" /><path d="M2 5l4 1 5 1v2H2z" fill="#2c6c66" /></svg>
        </ViewButton>
      </Details>
      <StatusBar>
        <StatusCell>78 items (Disk free space: 89.6 GB)</StatusCell>
        <StatusCell $width={88}>40.8 KB</StatusCell>
        <StatusCell $width={152}>
          <Monitor />Computer
          <svg width="9" height="9"><path d="M7 1h2M4 4h2M7 4h2M1 7h2M4 7h2M7 7h2" stroke="#bbb" strokeWidth="2" /></svg>
        </StatusCell>
      </StatusBar>
    </Client>
  </Frame>
);

export default function App() {
  return (
    <>
      <GlobalStyle />
      <Screen>
        <Background />
        <Desktop>
          <Shortcuts>
            <Shortcut icon={<BigComputer />}>My Computer</Shortcut>
            <Shortcut icon={<Rosette />}>DataWagon...</Shortcut>
            <Shortcut icon={<Chrome shortcut />}>Google<br />Chrome</Shortcut>
            <Shortcut icon={<DllFile />}>authui.dll</Shortcut>
            <Shortcut icon={<OpenFolder photo />}>BITMAP</Shortcut>
            <Shortcut icon={<OpenFolder />}>UIFILE</Shortcut>
            <Shortcut icon={<OpenFolder />}>IMAGE</Shortcut>
          </Shortcuts>
          <Shortcut corner icon={<RecycleBin />}>Recycle Bin</Shortcut>
          <BackWindow $left={122} $top={74} $right={102} $bottom={55} item="3" status="File" />
          <BackWindow $left={148} $top={100} $right={76} $bottom={29} item="2" status="28" />
          <ZipWindow />
          <Explorer />
        </Desktop>
        <Taskbar>
          <TaskButton $width={51} aria-label="Start"><WindowsLogo /></TaskButton>
          <TaskButton $width={52} $state="front" aria-label="File Explorer"><ExplorerIcon /></TaskButton>
          <TaskButton $width={63} aria-label="Google Chrome"><Chrome size={32} /></TaskButton>
          <TaskButton $width={58} $state="open" aria-label="7-Zip"><SevenZip large /></TaskButton>
          <Tray>
            <button aria-label="Show hidden icons"><svg width="8" height="5"><path d="M0 4.500L4 0l4 4.500z" fill="#fff" /></svg></button>
            <button aria-label="Network">
              <svg width="18" height="16"><path d="M4.500 2.500h11v8h-11z" fill="none" stroke="#fff" strokeWidth="1.400" /><path d="M10 11v3M6 14.300h8" stroke="#fff" strokeWidth="1.500" /><path d="M1.500 1.500h4v4h-4zM3.500 6v7" fill="#769f3a" stroke="#fff" /></svg>
            </button>
            <button aria-label="Volume">
              <svg width="18" height="16"><path d="M1 5.500h3L8 1.500v13l-4-4H1z" fill="#fff" /><path d="M10 5.500c1.500 1.500 1.500 3.500 0 5M12 3.500c3 2.500 3 6.500 0 9M14 1.500c4 4 4 9 0 13" fill="none" stroke="#fff" strokeWidth="1.200" /></svg>
            </button>
            <Clock>5:22 PM<br />1/5/2023</Clock>
          </Tray>
        </Taskbar>
      </Screen>
    </>
  );
}
